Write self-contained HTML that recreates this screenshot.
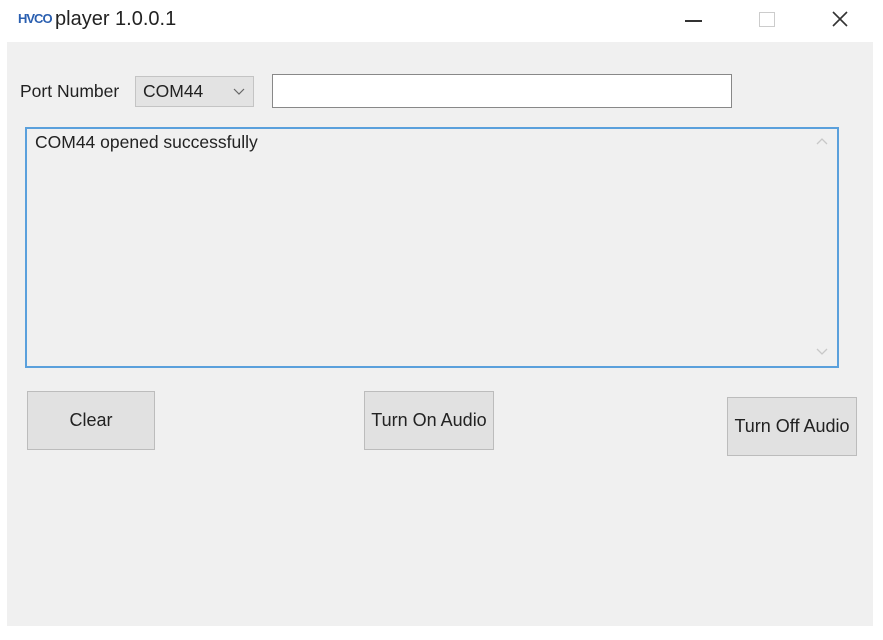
<!DOCTYPE html>
<html><head><style>
body{margin:0;width:883px;height:640px;background:#fff;position:relative;overflow:hidden;font-family:"Liberation Sans",sans-serif;color:#222;}
.a{position:absolute;}
.btn{position:absolute;background:#e1e1e1;border:1px solid #bcbcbc;font-size:18px;display:flex;align-items:center;justify-content:center;color:#222;box-sizing:border-box;white-space:nowrap;}
</style></head><body>
<div class="a" style="left:18px;top:11px;font-size:13px;color:#2a5fb0;font-weight:bold;letter-spacing:-1px">HVCO</div>
<div class="a" style="left:55px;top:8px;font-size:20px;color:#222">player 1.0.0.1</div>
<div class="a" style="left:685px;top:20px;width:17px;height:2px;background:#333"></div>
<div class="a" style="left:759px;top:12px;width:14px;height:13px;border:1px solid #ccc"></div>
<svg class="a" style="left:832px;top:11px" width="16" height="16"><path d="M1 1L15 15M15 1L1 15" stroke="#333" stroke-width="1.6"/></svg>
<div class="a" style="left:7px;top:42px;width:866px;height:584px;background:#f0f0f0"></div>
<div class="a" style="left:20px;top:81px;font-size:17.5px">Port Number</div>
<div class="a" style="left:135px;top:76px;width:119px;height:31px;background:#e3e3e3;border:1px solid #c4c4c4;box-sizing:border-box"></div>
<div class="a" style="left:143px;top:81px;font-size:17.5px">COM44</div>
<svg class="a" style="left:233px;top:88px" width="12" height="8"><path d="M1 1L6 6L11 1" stroke="#666" fill="none" stroke-width="1.2"/></svg>
<div class="a" style="left:272px;top:74px;width:460px;height:34px;background:#fff;border:1px solid #888;box-sizing:border-box"></div>
<div class="a" style="left:25px;top:127px;width:814px;height:241px;border:2px solid #5aa0dc;box-sizing:border-box;background:#f0f0f0"></div>
<div class="a" style="left:806px;top:129px;width:31px;height:237px;background:#f0f0f0"></div>
<svg class="a" style="left:816px;top:138px" width="12" height="8"><path d="M1 6L6 1L11 6" stroke="#c8c8c8" fill="none" stroke-width="1.3"/></svg>
<svg class="a" style="left:816px;top:348px" width="12" height="8"><path d="M1 1L6 6L11 1" stroke="#c8c8c8" fill="none" stroke-width="1.3"/></svg>
<div class="a" style="left:35px;top:132px;font-size:17.5px">COM44 opened successfully</div>
<div class="btn" style="left:27px;top:391px;width:128px;height:59px">Clear</div>
<div class="btn" style="left:364px;top:391px;width:130px;height:59px">Turn On Audio</div>
<div class="btn" style="left:727px;top:397px;width:130px;height:59px">Turn Off Audio</div>
</body></html>
